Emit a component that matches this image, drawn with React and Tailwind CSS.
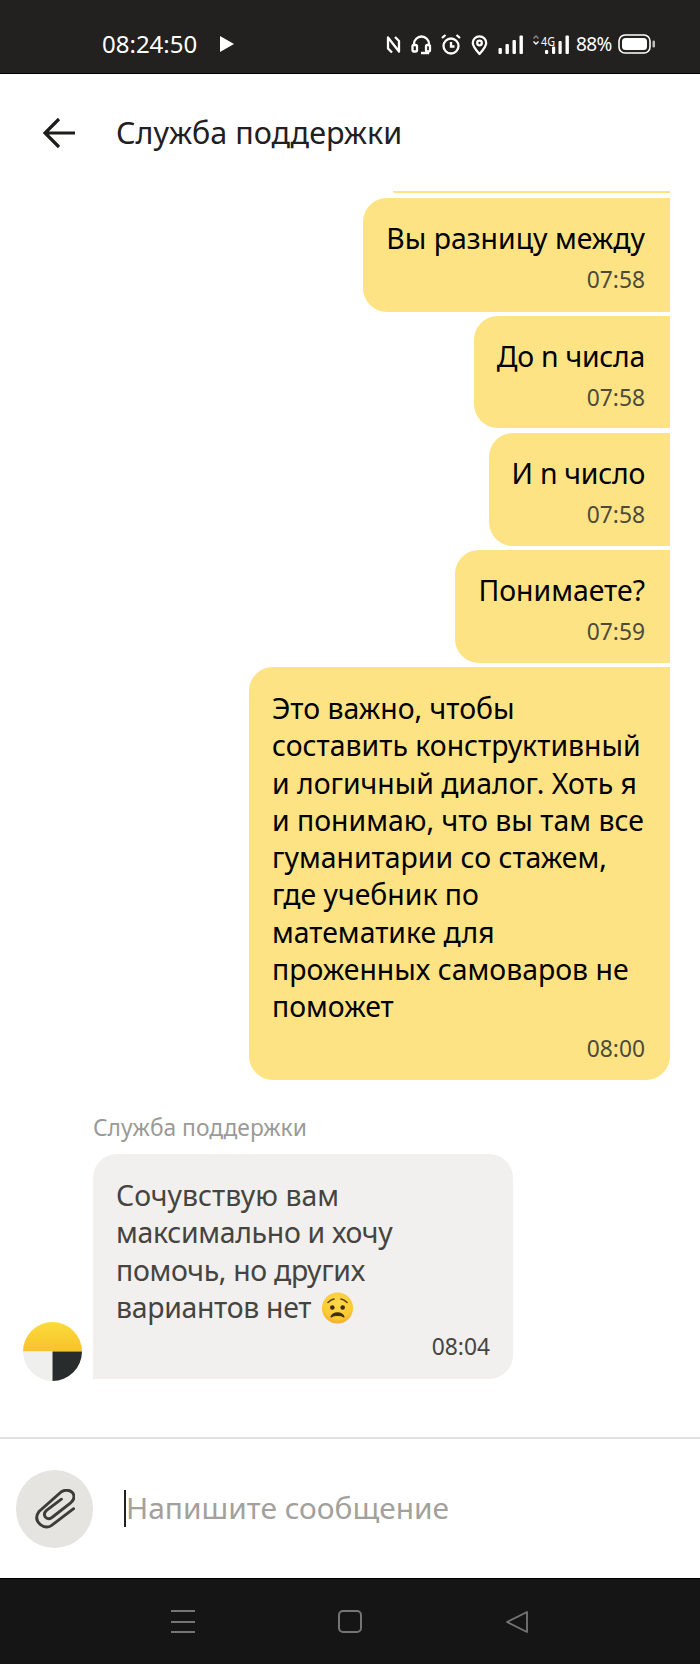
const font = "font-['Noto_Sans',sans-serif]";

const outgoing = [
  { id: 1, lines: ['Вы разницу между'], time: '07:58', box: 'mt-[5px] h-[114px] pt-[22px]' },
  { id: 2, lines: ['До n числа'], time: '07:58', box: 'mt-1 h-[112px] pt-[22px]', tight: true },
  { id: 3, lines: ['И n число'], time: '07:58', box: 'mt-[5px] h-[113px] pt-[22px]', tight: true },
  { id: 4, lines: ['Понимаете?'], time: '07:59', box: 'mt-1 h-[113px] pt-[22px]' },
  {
    id: 5,
    lines: [
      'Это важно, чтобы',
      'составить конструктивный',
      'и логичный диалог. Хоть я',
      'и понимаю, что вы там все',
      'гуманитарии со стажем,',
      'где учебник по',
      'математике для',
      'проженных самоваров не',
      'поможет',
    ],
    time: '08:00',
    box: 'mt-1 h-[413px] w-[421px] pt-[23px] rounded-br-[24px]',
  },
];

// drawn in page coordinates, so the numbers read off the screenshot directly
const StatusIcons = () => (
  <svg width="184" height="30" viewBox="386 29 184 30" fill="none" stroke="white" strokeWidth="2.3">
    <path d="M392 52.5 388 48.5V37.5L399 51.5V41L395 37" strokeLinejoin="round" />
    <path d="M414 46V44a7.5 7.5 0 0 1 15 0v2" />
    <rect x="412.5" y="45" width="4.5" height="6.5" rx="1.5" />
    <rect x="426" y="45" width="4" height="6.5" rx="1.5" />
    <path d="M428 51.5V53h-7" />
    <circle cx="451" cy="46" r="7.5" />
    <path d="M451 42v4.5h3.5M442 38l3.5-3M460 38l-3.5-3" />
    <path d="M479.5 54C475 49 472.8 46 472.8 43a6.7 6.7 0 0 1 13.4 0C486.2 46 484 49 479.5 54z" strokeLinejoin="round" />
    <circle cx="479.5" cy="43" r="2.3" />
    <g fill="white" stroke="none">
      <rect x="498.5" y="48" width="3.4" height="6" rx="1" />
      <rect x="505.5" y="44" width="3.4" height="10" rx="1" />
      <rect x="512.5" y="40" width="3.4" height="14" rx="1" />
      <rect x="519.5" y="35.5" width="3.4" height="18.5" rx="1" />
      <rect x="545" y="50" width="3.2" height="4" rx="1" />
      <rect x="552" y="46.5" width="3.2" height="7.5" rx="1" />
      <rect x="558.5" y="41" width="3.2" height="13" rx="1" />
      <rect x="565.5" y="35.5" width="3.4" height="18.5" rx="1" />
      <text x="541" y="45.5" fontSize="12.5" textLength="14" lengthAdjust="spacingAndGlyphs" fontFamily="Noto Sans">4G</text>
    </g>
    <path d="M533.5 38.5 536 36l2.5 2.5" stroke="#8a8a8a" strokeWidth="1.4" />
    <path d="M533.5 41.5 536 44l2.5-2.5" strokeWidth="1.4" />
  </svg>
);

const Battery = () => (
  <svg width="38" height="20" viewBox="0 0 38 20" fill="none">
    <rect x="1" y="1" width="31" height="18" rx="6" stroke="white" strokeWidth="1.6" />
    <rect x="4" y="4" width="25" height="12" rx="3.5" fill="white" />
    <rect x="34.5" y="6.5" width="2.5" height="7" rx="1.2" fill="#bdbdbd" />
  </svg>
);

const Avatar = () => (
  <svg width="59" height="59" viewBox="0 0 59 59" className="-mb-[2px]">
    <defs>
      <linearGradient id="avatarTop" x1="0" y1="0" x2="0" y2="1">
        <stop offset="0" stopColor="#fbdc3a" />
        <stop offset="1" stopColor="#f8c12d" />
      </linearGradient>
    </defs>
    <path d="M0 29.5a29.5 29.5 0 0 1 59 0z" fill="url(#avatarTop)" />
    <path d="M0 29.5h29.5V59A29.5 29.5 0 0 1 0 29.5z" fill="#eff0ee" />
    <path d="M29.5 29.5H59A29.5 29.5 0 0 1 29.5 59z" fill="#292c2c" />
  </svg>
);

const WorriedFace = () => (
  <svg width="33" height="32" viewBox="0 0 32 32" className="ml-[10px]">
    <defs>
      <radialGradient id="faceFill" cx="0.5" cy="0.35" r="0.7">
        <stop offset="0" stopColor="#fdd94a" />
        <stop offset="0.7" stopColor="#fbc934" />
        <stop offset="1" stopColor="#f0a02a" />
      </radialGradient>
    </defs>
    <circle cx="16" cy="16" r="15.5" fill="url(#faceFill)" />
    <circle cx="10.8" cy="15.5" r="2.3" fill="#3f2a10" />
    <circle cx="21.2" cy="15.5" r="2.3" fill="#3f2a10" />
    <path d="M9.5 25c2-5.5 11-5.5 13 0-3-2-10-2-13 0z" fill="#3f2a10" stroke="#3f2a10" strokeWidth="1.2" strokeLinejoin="round" />
    <path d="M6.5 10.5C8 9 10 7.5 12.5 7M25.5 10.5C24 9 22 7.5 19.5 7" fill="none" stroke="#5a3d14" strokeWidth="1.6" strokeLinecap="round" />
  </svg>
);

const App = () => (
  <div className={`${font} w-[700px] h-[1664px] bg-white flex flex-col overflow-hidden`}>
    <div className="h-[74px] bg-[#22211f] border-b border-[#000] flex items-center pt-[15px] pl-[102px] pr-[44px] text-white">
      <span className="text-[24px]">08:24:50</span>
      <span className="ml-[23px] w-0 h-0 border-y-[8px] border-y-transparent border-l-[14px] border-l-white" />
      <div className="ml-auto flex items-center">
        <StatusIcons />
        <span className="ml-[6px] w-[36px] text-[19px] whitespace-nowrap tracking-[-0.6px]">88%</span>
        <div className="ml-[6px]"><Battery /></div>
      </div>
    </div>

    <div className="h-[116px] flex items-center pl-[42px] pt-[2px]">
      <svg width="34" height="32" viewBox="0 0 34 32" fill="none" stroke="#1d1d1b" strokeWidth="3.2">
        <path d="M33 16H3M17 2 3 16l14 14" />
      </svg>
      <span className="ml-[40px] text-[30.5px] text-[#21201f]">Служба поддержки</span>
    </div>

    <div className="flex-1 flex flex-col items-end pr-[30px]">
      <div className="w-[277px] h-[2px] mt-px bg-[#fde384] rounded-bl-[4px]" />
      {outgoing.map((m) => (
        <div key={m.id} className={`${m.box} bg-[#fde384] rounded-l-[24px] pl-[23px] pr-[25px] flex flex-col`}>
          {m.lines.map((l) => (
            <div key={l} className={`text-[28.4px] leading-[37.3px] text-black whitespace-nowrap ${m.tight ? 'tracking-[-0.25px]' : ''}`}>{l}</div>
          ))}
          <div className="text-[22.8px] leading-[30px] text-[#4d4a3c] text-right mt-[8px]">{m.time}</div>
        </div>
      ))}

      <div className="self-start mt-[33px] pl-[93px] text-[22.8px] leading-[30px] text-[#9b9a97]">Служба поддержки</div>
      <div className="self-start mt-[11px] flex items-end pl-[23px]">
        <Avatar />
        <div className="ml-[11px] w-[420px] h-[225px] bg-[#f1f0ee] rounded-t-[24px] rounded-br-[24px] pl-[23px] pt-[23px]">
          <div className="text-[28.4px] leading-[37.3px] text-[#45443f]">Сочувствую вам</div>
          <div className="text-[28.4px] leading-[37.3px] text-[#45443f] tracking-[-0.3px]">максимально и хочу</div>
          <div className="text-[28.4px] leading-[37.3px] text-[#45443f] tracking-[-0.3px]">помочь, но других</div>
          <div className="text-[28.4px] leading-[37.3px] text-[#45443f] tracking-[-0.3px] flex items-center">
            вариантов нет
            <WorriedFace />
          </div>
          <div className="text-[22.8px] leading-[30px] text-[#45443f] text-right pr-[23px] mt-[6px]">08:04</div>
        </div>
      </div>
    </div>

    <div className="h-[141px] border-t-2 border-[#e2e1df] flex items-center pl-[16px]">
      <div className="w-[77px] h-[78px] rounded-full bg-[#e5e4e0] flex items-center justify-center">
        <svg width="40" height="40" viewBox="72 70 118 118" fill="none" stroke="#3d3c38" strokeWidth="8.5" strokeLinecap="round">
          <path d="M186 128 120 178Q105 188 88 175 68 158 84 136L150 78Q168 68 182 80 194 95 178 110L122 154Q110 162 102 152 96 142 106 133L150 100" />
        </svg>
      </div>
      <div className="ml-[31px] flex items-center">
        <span className="w-[2px] h-[37px] bg-[#21201f]" />
        <span className="text-[29.9px] text-[#a3a19b]">Напишите сообщение</span>
      </div>
    </div>

    <div className="h-[86px] bg-[#151515] border-t border-black flex items-center justify-center gap-[143px]">
      <div className="w-[24px] h-[23px] flex flex-col justify-between">
        <span className="h-[2px] bg-[#757575]" />
        <span className="h-[2px] bg-[#757575]" />
        <span className="h-[2px] bg-[#757575]" />
      </div>
      <div className="w-[24px] h-[23px] rounded-[5px] border-2 border-[#757575]" />
      <svg width="24" height="24" viewBox="0 0 24 24" fill="none" stroke="#757575" strokeWidth="1.8" strokeLinejoin="round">
        <path d="M22 2v20L2 12z" />
      </svg>
    </div>
  </div>
);

export default App;
